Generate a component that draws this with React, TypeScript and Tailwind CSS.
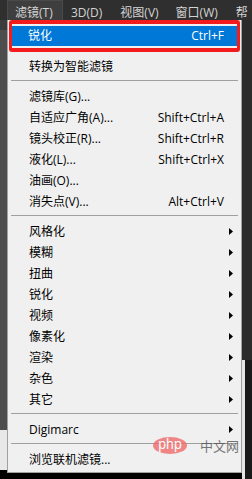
const FONT = "font-['Open_Sans','Noto_Sans_CJK_SC',sans-serif]"

type Row =
  | { kind: "item"; label: string; shortcut?: string; sub?: boolean }
  | { kind: "sep" }

const ROWS: Row[] = [
  { kind: "item", label: "转换为智能滤镜" },
  { kind: "sep" },
  { kind: "item", label: "滤镜库(G)..." },
  { kind: "item", label: "自适应广角(A)...", shortcut: "Shift+Ctrl+A" },
  { kind: "item", label: "镜头校正(R)...", shortcut: "Shift+Ctrl+R" },
  { kind: "item", label: "液化(L)...", shortcut: "Shift+Ctrl+X" },
  { kind: "item", label: "油画(O)..." },
  { kind: "item", label: "消失点(V)...", shortcut: "Alt+Ctrl+V" },
  { kind: "sep" },
  { kind: "item", label: "风格化", sub: true },
  { kind: "item", label: "模糊", sub: true },
  { kind: "item", label: "扭曲", sub: true },
  { kind: "item", label: "锐化", sub: true },
  { kind: "item", label: "视频", sub: true },
  { kind: "item", label: "像素化", sub: true },
  { kind: "item", label: "渲染", sub: true },
  { kind: "item", label: "杂色", sub: true },
  { kind: "item", label: "其它", sub: true },
  { kind: "sep" },
  { kind: "item", label: "Digimarc", sub: true },
  { kind: "sep" },
  { kind: "item", label: "浏览联机滤镜..." },
]

function Arrow() {
  return (
    <svg width="4" height="7" viewBox="0 0 4 7" className="block">
      <path d="M0 0L4 3.5L0 7z" fill="#000" />
    </svg>
  )
}

export default function App() {
  return (
    <div className={`relative w-[252px] h-[479px] overflow-hidden bg-[#2b2b2b] text-[12px] ${FONT}`}>
      {/* menu bar */}
      <div className="flex h-[20px] bg-[#2f2f2f] text-[#d4d4d4] leading-[17px]">
        <div className="ml-[7px] w-[56px] h-[20px] bg-[#3e3e3e] border-x border-t border-[#4a4a4a] pl-[7px] pt-[3px]">滤镜(T)</div>
        <div className="ml-[8px] pt-[4px]">3D(D)</div>
        <div className="ml-[18px] pt-[4px]">视图(V)</div>
        <div className="ml-[17px] pt-[4px]">窗口(W)</div>
        <div className="ml-[18px] pt-[4px]">帮</div>
      </div>

      <div className="flex h-[459px]">
        <div className="w-[7px] flex flex-col">
          <div className="h-[10px] bg-[#3c3c3c]" />
          <div className="flex-1 bg-[#4d4d4d]" />
          <div className="h-[40px] bg-[#e8e8e8]" />
          <div className="h-[9px] bg-black" />
        </div>

        <div className="w-[235px] flex flex-col">
          <div className="bg-[#f0f0f0] border-x border-b border-[#a0a0a0] pb-[2px] text-black">
            <div className="ml-[1px] mr-[1px] border-x-[3px] border-y-4 border-[#f31b1b] rounded-[3px] py-[2px]">
              <div className="h-[20px] bg-[#0078d7] text-white flex items-center pl-[16px] pr-[13px]">
                <span className="flex-1">锐化</span>
                <span>Ctrl+F</span>
              </div>
            </div>
            <div className="h-[4px]" />
            {ROWS.map((row, i) =>
              row.kind === "sep" ? (
                <div key={i} className="h-[9px] pt-[3px] px-[3px]">
                  <div className="h-px bg-[#a0a0a0]" />
                </div>
              ) : (
                <div key={i} className="h-[21px] flex items-center pl-[21px] pr-[8px]">
                  <span className="flex-1 whitespace-nowrap">{row.label}</span>
                  {row.shortcut && <span className="whitespace-nowrap">{row.shortcut}</span>}
                  <span className="w-[9px] flex justify-end">{row.sub && <Arrow />}</span>
                </div>
              )
            )}
          </div>
          <div className="flex-1 bg-black" />
        </div>

        <div className="w-[10px] flex flex-col">
          <div className="h-[340px] bg-[#2b2b2b]" />
          <div className="flex-1 flex">
            <div className="w-[3px] bg-[#e6e6e6]" />
            <div className="flex-1 bg-[#1a1a1a]" />
          </div>
        </div>
      </div>

      {/* watermark */}
      <div className="absolute left-[153px] top-[437px] flex items-center gap-[13px] opacity-80">
        <div className="w-[34px] h-[17px] rounded-[50%] bg-[#ef6b6b] text-white text-[14px] leading-[15px] text-center font-['Liberation_Sans',sans-serif]">php</div>
        <div className="text-[#555] text-[13px] leading-[17px] font-['Noto_Sans_CJK_SC',sans-serif]">中文网</div>
      </div>
    </div>
  )
}
